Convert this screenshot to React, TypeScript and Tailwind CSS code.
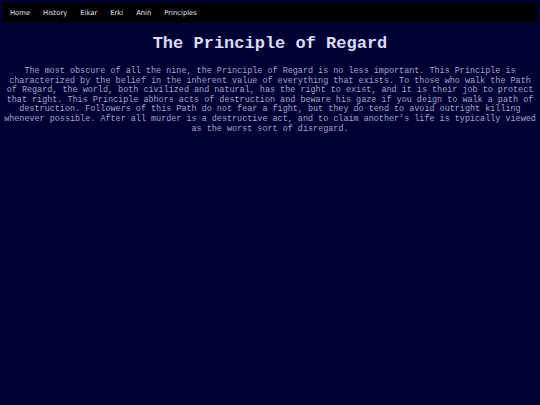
const NAV_ITEMS = ["Home", "History", "Eikar", "Erki", "Anin", "Principles"];

export default function App() {
  return (
    <div className="min-h-[405px] w-[540px] bg-[#000033] pt-[3px]">
      <nav className="mx-[3px] flex h-[20px] items-center gap-[13px] bg-black pl-[7px] font-['DejaVu_Sans',sans-serif] text-[6.8px] text-[#e6e6f0]">
        {NAV_ITEMS.map((item) => (
          <span key={item}>{item}</span>
        ))}
      </nav>
      <h1 className="mt-[11px] text-center font-['Liberation_Mono',monospace] text-[17px] font-bold leading-[20px] text-[#dcdcff]">
        The Principle of Regard
      </h1>
      <p className="mt-[13px] px-[3px] text-center font-['Liberation_Mono',monospace] text-[8.45px] leading-[9.6px] text-[#a4a4cc]">
        The most obscure of all the nine, the Principle of Regard is no less important. This Principle is
        characterized by the belief in the inherent value of everything that exists. To those who walk the Path
        of Regard, the world, both civilized and natural, has the right to exist, and it is their job to protect
        that right. This Principle abhors acts of destruction and beware his gaze if you deign to walk a path of
        destruction. Followers of this Path do not fear a fight, but they do tend to avoid outright killing
        whenever possible. After all murder is a destructive act, and to claim another's life is typically viewed
        as the worst sort of disregard.
      </p>
    </div>
  );
}
